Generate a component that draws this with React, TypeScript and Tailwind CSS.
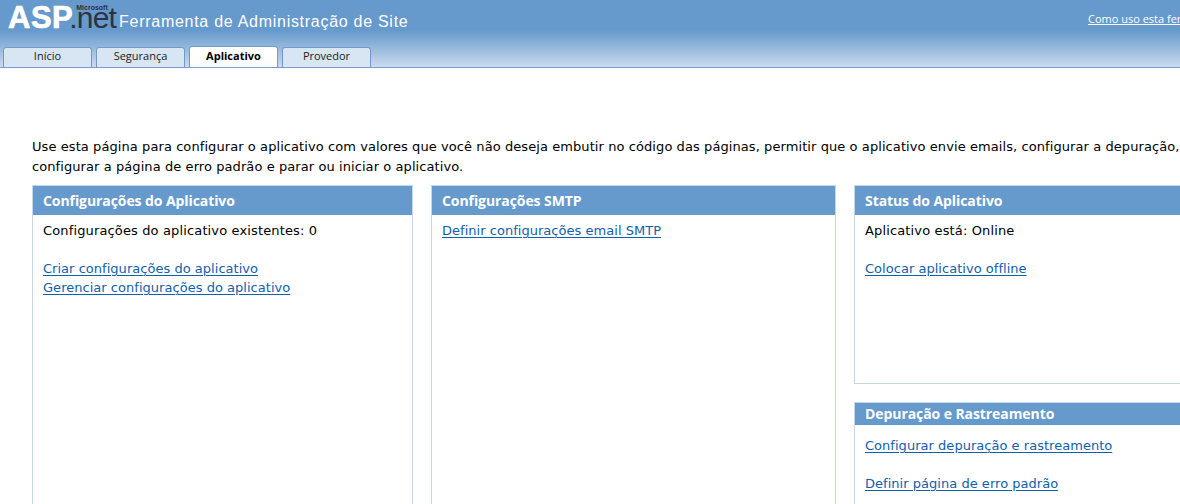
const verdana = "font-['DejaVu_Sans',Verdana,sans-serif]";

function Tab({ label, active }: { label: string; active?: boolean }) {
  return (
    <div
      className={
        "flex w-[89px] items-center justify-center rounded-t-[3px] border border-b-0 border-[#7199c9] pb-[2px] text-[11px] font-['Open_Sans',Tahoma,sans-serif] " +
        (active ? "h-[21px] bg-white font-bold text-black" : "h-[20px] bg-[#d8e5f3] text-[#222]")
      }
    >
      {label}
    </div>
  );
}

function Panel({
  title,
  className,
  headClass,
  bodyClass,
  children,
}: {
  title: string;
  className?: string;
  headClass?: string;
  bodyClass?: string;
  children: React.ReactNode;
}) {
  return (
    <section className={"border border-[#c5d8ea] bg-white " + (className ?? "")}>
      <h2
        className={
          "flex items-center bg-[#6699cc] pl-[10px] font-['Open_Sans',Tahoma,sans-serif] text-[14px] font-bold tracking-[-0.08px] text-white " +
          (headClass ?? "h-[29px]")
        }
      >
        {title}
      </h2>
      <div className={"px-[10px] text-[13px] leading-[19px] tracking-[0.14px] " + (bodyClass ?? "pt-[6px]")}>
        {children}
      </div>
    </section>
  );
}

function L({ children }: { children: React.ReactNode }) {
  return (
    <a href="#" className="block tracking-[0.03px] text-[#1160ae] underline underline-offset-2">
      {children}
    </a>
  );
}

export default function App() {
  return (
    <div className={"h-[504px] w-[1180px] overflow-hidden bg-white text-black " + verdana}>
      <header className="flex h-[68px] flex-col justify-between border-b border-[#7f9ad0] bg-gradient-to-b from-[#6699cc] from-45% to-[#c9dbee]">
        <div className="flex items-start justify-between">
          <div className="flex items-start pl-[8px]">
            <span className="mt-[2px] font-['Liberation_Sans',Arial,sans-serif] text-[31px] font-bold leading-[32px] tracking-[0.5px] text-white [-webkit-text-stroke:0.7px_white]">
              ASP
            </span>
            <span className="relative mt-[2px] ml-[-4px] font-['Liberation_Sans',Arial,sans-serif] text-[30px] leading-[32px] tracking-[-0.8px] text-[#2b3440]">
              .net
              <span className="absolute left-[7px] top-[2px] text-[7px] font-bold leading-[8px] tracking-normal">
                Microsoft
              </span>
            </span>
            <span className="ml-[3px] mt-[12px] font-['Liberation_Sans',Arial,sans-serif] text-[16px] leading-[20px] tracking-[0.72px] text-white">
              Ferramenta de Administração de Site
            </span>
          </div>
          <a
            href="#"
            className="mt-[12px] w-[92px] overflow-hidden whitespace-nowrap font-['Open_Sans',Tahoma,sans-serif] text-[11px] leading-[14px] text-white underline"
          >
            Como uso esta ferramenta?
          </a>
        </div>
        <nav className="flex items-end gap-[4px] pl-[3px]">
          <Tab label="Início" />
          <Tab label="Segurança" />
          <Tab label="Aplicativo" active />
          <Tab label="Provedor" />
        </nav>
      </header>

      <main className="w-[1400px] pl-[32px] pt-[69px]">
        <p className="whitespace-nowrap text-[13px] leading-[20px] tracking-[0.08px]">
          Use esta página para configurar o aplicativo com valores que você não deseja embutir no código das páginas, permitir que o aplicativo envie emails, configurar a depuração,
          <br />
          configurar a página de erro padrão e parar ou iniciar o aplicativo.
        </p>
        <div className="mt-[8px] flex items-start gap-[18px]">
          <Panel title="Configurações do Aplicativo" className="h-[340px] w-[381px]">
            <p>Configurações do aplicativo existentes: 0</p>
            <div className="mt-[19px]">
              <L>Criar configurações do aplicativo</L>
              <L>Gerenciar configurações do aplicativo</L>
            </div>
          </Panel>
          <Panel title="Configurações SMTP" className="h-[340px] w-[405px]">
            <L>Definir configurações email SMTP</L>
          </Panel>
          <div className="flex w-[400px] flex-col gap-[18px]">
            <Panel title="Status do Aplicativo" className="h-[199px]">
              <p>Aplicativo está: Online</p>
              <div className="mt-[19px]">
                <L>Colocar aplicativo offline</L>
              </div>
            </Panel>
            <Panel
              title="Depuração e Rastreamento"
              className="h-[140px]"
              headClass="h-[22px] pb-[1px]"
              bodyClass="pt-[11px]"
            >
              <L>Configurar depuração e rastreamento</L>
              <div className="mt-[19px]">
                <L>Definir página de erro padrão</L>
              </div>
            </Panel>
          </div>
        </div>
      </main>
    </div>
  );
}
